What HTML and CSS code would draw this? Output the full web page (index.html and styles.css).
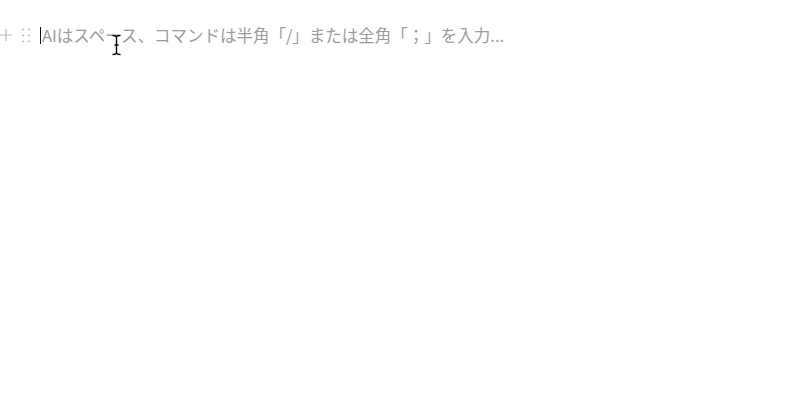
FILE: index.html
```html
<!DOCTYPE html>
<html lang="ja">
<head>
<meta charset="utf-8">
<link rel="stylesheet" href="styles.css">
</head>
<body>
<div class="editor">
  <div class="block">
    <div class="handles">
      <svg class="icon plus" width="12" height="14" viewBox="0 0 12 14"><path d="M6 1V13M0 7H12" stroke="#b8b8b8" stroke-width="1.2" fill="none"/></svg>
      <svg class="icon grip" width="10" height="14" viewBox="0 0 10 14"><g fill="#bdbdbd"><circle cx="2" cy="1.5" r="1.1"/><circle cx="8" cy="1.5" r="1.1"/><circle cx="2" cy="7.5" r="1.1"/><circle cx="8" cy="7.5" r="1.1"/><circle cx="2" cy="13.5" r="1.1"/><circle cx="8" cy="13.5" r="1.1"/></g></svg>
    </div>
    <div class="content">
      <span class="caret"></span><span class="placeholder">AIはスペース、コマンドは半角「/」または全角「；」を入力...</span>
      <svg class="ibeam" width="11" height="22" viewBox="0 0 11 22"><path d="M1.5 1.5C4 1.5 5.5 2 5.5 3.5C5.5 2 7 1.5 9.5 1.5M5.5 3.5V18.5M1.5 20.5C4 20.5 5.5 20 5.5 18.5C5.5 20 7 20.5 9.5 20.5M3.5 11H7.5" stroke="#000" stroke-width="1.4" fill="none"/></svg>
    </div>
  </div>
</div>
</body>
</html>
```
FILE: styles.css
```css
html, body {
  margin: 0;
  padding: 0;
  background: #ffffff;
}
.editor {
  padding-top: 24px;
  width: 800px;
  height: 420px;
  box-sizing: border-box;
}
.block {
  display: flex;
  align-items: center;
  height: 22px;
}
.handles {
  display: flex;
  align-items: center;
  gap: 9px;
  width: 40px;
  margin-top: -1px;
}
.icon { display: block; }
.content {
  position: relative;
  display: flex;
  align-items: center;
  font-family: "Noto Sans CJK JP", "Noto Sans", sans-serif;
  font-size: 16.5px;
  line-height: 22px;
  color: #9b9b9b;
}
.caret {
  display: inline-block;
  width: 1px;
  height: 17px;
  background: #111;
  margin-right: 1px;
}
.ibeam {
  position: absolute;
  left: 71px;
  top: 10px;
}
```
